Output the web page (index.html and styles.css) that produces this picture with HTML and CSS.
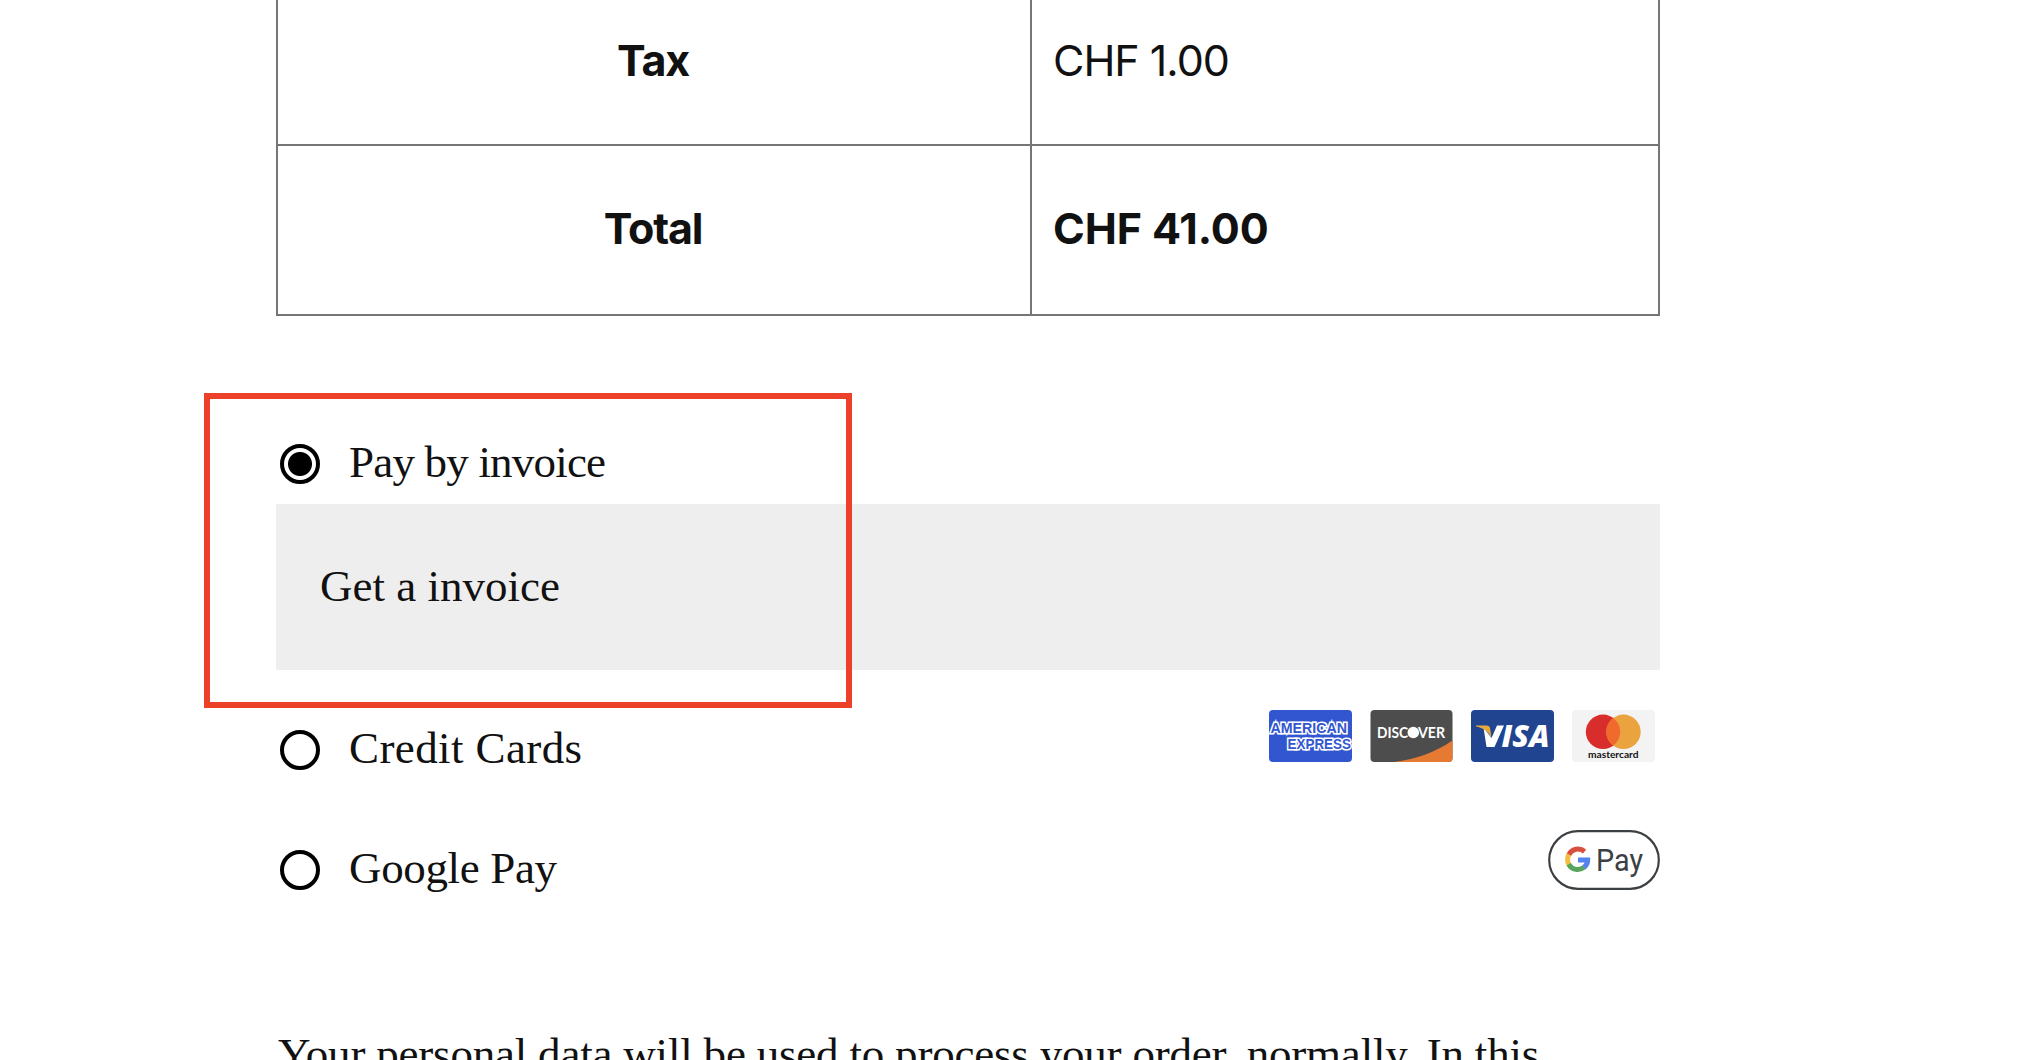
FILE: index.html
```html
<!DOCTYPE html>
<html lang="en">
<head>
<meta charset="utf-8">
<title>Checkout</title>
<link rel="stylesheet" href="styles.css">
</head>
<body>
<main class="checkout">
  <table class="totals">
    <tbody>
      <tr><th>Tax</th><td>CHF 1.00</td></tr>
      <tr class="grand"><th>Total</th><td>CHF 41.00</td></tr>
    </tbody>
  </table>

  <section class="methods">
    <div class="method">
      <span class="radio checked"></span>
      <span class="label pay">Pay by invoice</span>
    </div>
    <div class="details"><span class="get">Get a invoice</span></div>
    <div class="method cards-row">
      <span class="radio"></span>
      <span class="label credit">Credit Cards</span>
      <div class="cards">
        <svg class="card" viewBox="0 0 83 52" role="img" aria-label="American Express">
          <rect width="83" height="52" rx="4" fill="#3156d0"/>
          <g font-family="Liberation Sans, Arial, sans-serif" font-weight="700" font-size="14.5" fill="#3156d0" stroke="#fff" stroke-width="3.2" paint-order="stroke" stroke-linejoin="miter">
            <text x="1.500" y="22.8" textLength="76.500" lengthAdjust="spacingAndGlyphs">AMERICAN</text>
            <text x="18.500" y="39.4" textLength="63.500" lengthAdjust="spacingAndGlyphs">EXPRESS</text>
          </g>
        </svg>
        <svg class="card" viewBox="0 0 83 52" role="img" aria-label="Discover">
          <rect x="0.500" width="82" height="52" rx="4" fill="#4d4d4d"/>
          <path d="M24 52Q57 48 82.500 30.500V48a4 4 0 0 1-4 4Z" fill="#e67a32"/>
          <g font-family="Lato, sans-serif" font-weight="700" font-size="14.500" fill="#fff">
            <text x="7" y="27.500" textLength="31" lengthAdjust="spacingAndGlyphs">DISC</text>
            <text x="48" y="27.500" textLength="27" lengthAdjust="spacingAndGlyphs">VER</text>
          </g>
          <circle cx="43.300" cy="22.500" r="5.800" fill="#fff"/>
        </svg>
        <svg class="card" viewBox="0 0 83 52" role="img" aria-label="Visa">
          <rect width="83" height="52" rx="4" fill="#20448f"/>
          <path d="M12.500 17.500 15.500 37H23.500L33 15.500H26L20.500 28Z" fill="#fff"/>
          <path d="M5 15.500h10c3 0 3.800 1 4.200 3.500L20.500 28C18 22 12 17.500 5 16.500Z" fill="#e8a93c"/>
          <text x="30.500" y="37" textLength="48" lengthAdjust="spacingAndGlyphs" font-family="Open Sans, sans-serif" font-weight="800" font-style="italic" font-size="30" fill="#fff">ISA</text>
        </svg>
        <svg class="card" viewBox="0 0 83 52" role="img" aria-label="Mastercard">
          <rect width="83" height="52" rx="4" fill="#f3f3f3"/>
          <circle cx="31" cy="21.800" r="17.200" fill="#d92d2b"/>
          <circle cx="51.500" cy="21.800" r="17.200" fill="#eba33f"/>
          <path d="M41.250 8a17.200 17.200 0 0 1 0 27.600 17.200 17.200 0 0 1 0-27.600Z" fill="#ef6a2c"/>
          <text x="16" y="47.800" textLength="50.500" lengthAdjust="spacingAndGlyphs" font-family="Lato, sans-serif" font-weight="700" font-size="10" fill="#111">mastercard</text>
        </svg>
      </div>
    </div>
    <div class="method google-row">
      <span class="radio"></span>
      <span class="label google">Google Pay</span>
      <svg class="gpay" viewBox="0 0 112 60" role="img" aria-label="Google Pay">
        <rect x="1.200" y="1.200" width="109.600" height="57.600" rx="28.800" fill="#fff" stroke="#3c4043" stroke-width="2.200"/>
        <g fill="none" stroke-width="5">
          <path d="M36.600 21.500A10.200 10.200 0 0 0 20.700 25" stroke="#d9503f"/>
          <path d="M20.900 24.600A10.200 10.200 0 0 0 20.900 34.600" stroke="#f2bd42"/>
          <path d="M20.700 34.200A10.200 10.200 0 0 0 36.200 37.200" stroke="#58a65c"/>
          <path d="M36 37.500A10.200 10.200 0 0 0 39.700 29.900H30" stroke="#5383ec"/>
        </g>
        <text x="48" y="41" textLength="47" lengthAdjust="spacingAndGlyphs" font-family="Roboto, sans-serif" font-size="31" fill="#3c4043">Pay</text>
      </svg>
    </div>
    <div class="highlight"></div>
  </section>

  <p class="privacy">Your personal data will be used to process your order, normally. In this</p>
</main>
</body>
</html>
```
FILE: styles.css
```css
body {
  margin: 0;
  height: 1060px;
  overflow: hidden;
  background: #fff;
  color: #111;
  font-family: "Liberation Serif", serif;
  font-size: 45px;
}

.checkout {
  width: 1384px;
  height: 1060px;
  margin-left: 276px;
  overflow: hidden;
}

.totals {
  width: 1384px;
  margin-top: -26px;
  border-collapse: collapse;
  table-layout: fixed;
  font-family: Inter, sans-serif;
  font-size: 43px;
  letter-spacing: -1px;
}

.totals th,
.totals td {
  box-sizing: border-box;
  height: 170px;
  padding: 0 21px;
  border: 2px solid #767676;
  font-weight: 400;
  text-align: left;
}

.totals th {
  width: 754px;
  padding-right: 23px;
  font-weight: 700;
  letter-spacing: -1.2px;
  text-align: center;
}

.totals .grand th,
.totals .grand td {
  padding-bottom: 4px;
}

.totals .grand td {
  font-weight: 700;
  letter-spacing: -0.1px;
}

.methods {
  padding-top: 124px;
}

.method {
  display: flex;
  align-items: flex-start;
  height: 64px;
  padding-left: 4px;
}

.radio {
  box-sizing: border-box;
  flex: none;
  width: 40px;
  height: 40px;
  margin: 4px 29px 0 0;
  border: 4px solid #000;
  border-radius: 50%;
}

.checked {
  background: radial-gradient(circle, #000 11.5px, #fff 12.5px);
}

.label {
  line-height: 44px;
  white-space: nowrap;
}

.pay { letter-spacing: -0.8px; }
.get { letter-spacing: 0; }
.credit { letter-spacing: 0.4px; }
.google { letter-spacing: -0.35px; }

.details {
  display: flex;
  align-items: center;
  box-sizing: border-box;
  height: 166px;
  padding: 0 44px 3px;
  background: #eee;
}

.cards-row {
  height: 120px;
  padding-top: 56px;
  box-sizing: border-box;
}

.cards {
  display: flex;
  gap: 18px;
  margin: -16px 5px 0 auto;
}

.card {
  width: 83px;
  height: 52px;
}

.google-row {
  height: 176px;
  padding-top: 56px;
  box-sizing: border-box;
}

.gpay {
  width: 112px;
  height: 60px;
  margin: -16px 0 0 auto;
}

.privacy {
  margin: 63px 0 0 2px;
  line-height: 50px;
  letter-spacing: -0.2px;
  white-space: nowrap;
}

/* Callout frame drawn over the selected method */
.highlight {
  position: absolute;
  top: 393px;
  left: 204px;
  box-sizing: border-box;
  width: 648px;
  height: 315px;
  border: 6px solid #ec4128;
}
```
